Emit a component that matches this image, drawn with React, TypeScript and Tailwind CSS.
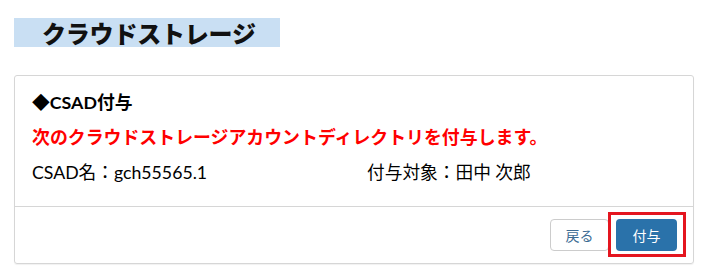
import React from 'react';

const font = { fontFamily: 'Lato, "Noto Sans CJK JP", sans-serif' };

export default function App() {
  return (
    <div className="min-h-[271px] w-[722px] bg-white text-black" style={font}>
      <div className="pl-[14px] pt-[18px]">
        <div className="flex h-[29px] w-[266px] items-center bg-[#c9dff3] pl-[28px]">
          <h1 className="text-[24px] leading-none font-black tracking-[-0.2px] text-[#111]" style={{ fontFamily: '"Noto Sans CJK JP", sans-serif' }}>
            クラウドストレージ
          </h1>
        </div>
      </div>

      <div className="mt-[28px] ml-[14px] w-[680px] rounded-[3px] border border-[#d6d6d6] shadow-[0_1px_1px_rgba(0,0,0,0.06)]">
        <div className="px-[17px] pt-[13px] pb-[20px]">
          <p className="text-[17.8px] leading-[26px] font-bold">◆CSAD付与</p>
          <p className="mt-[9px] text-[17.9px] leading-[26px] font-bold text-[#ff0000]">
            次のクラウドストレージアカウントディレクトリを付与します。
          </p>
          <div className="mt-[10px] flex text-[17.7px] leading-[26px]">
            <span className="w-[335px]">CSAD名：gch55565.1</span>
            <span>付与対象：田中 次郎</span>
          </div>
        </div>
        <div className="flex justify-end gap-[7px] border-t border-[#d6d6d6] pt-[12px] pr-[16px] pb-[12px]">
          <button className="h-[32px] w-[59px] rounded-[4px] border border-[#cccccc] bg-white text-[14px] text-[#3d6c94]">
            戻る
          </button>
          <div className="relative">
            <button className="h-[32px] w-[61px] rounded-[4px] bg-[#2a72aa] text-[14px] text-white">
              付与
            </button>
            <div className="pointer-events-none absolute -top-[7px] -right-[9px] -bottom-[6px] -left-[8px] border-[3px] border-[#e4151f]" />
          </div>
        </div>
      </div>
    </div>
  );
}
